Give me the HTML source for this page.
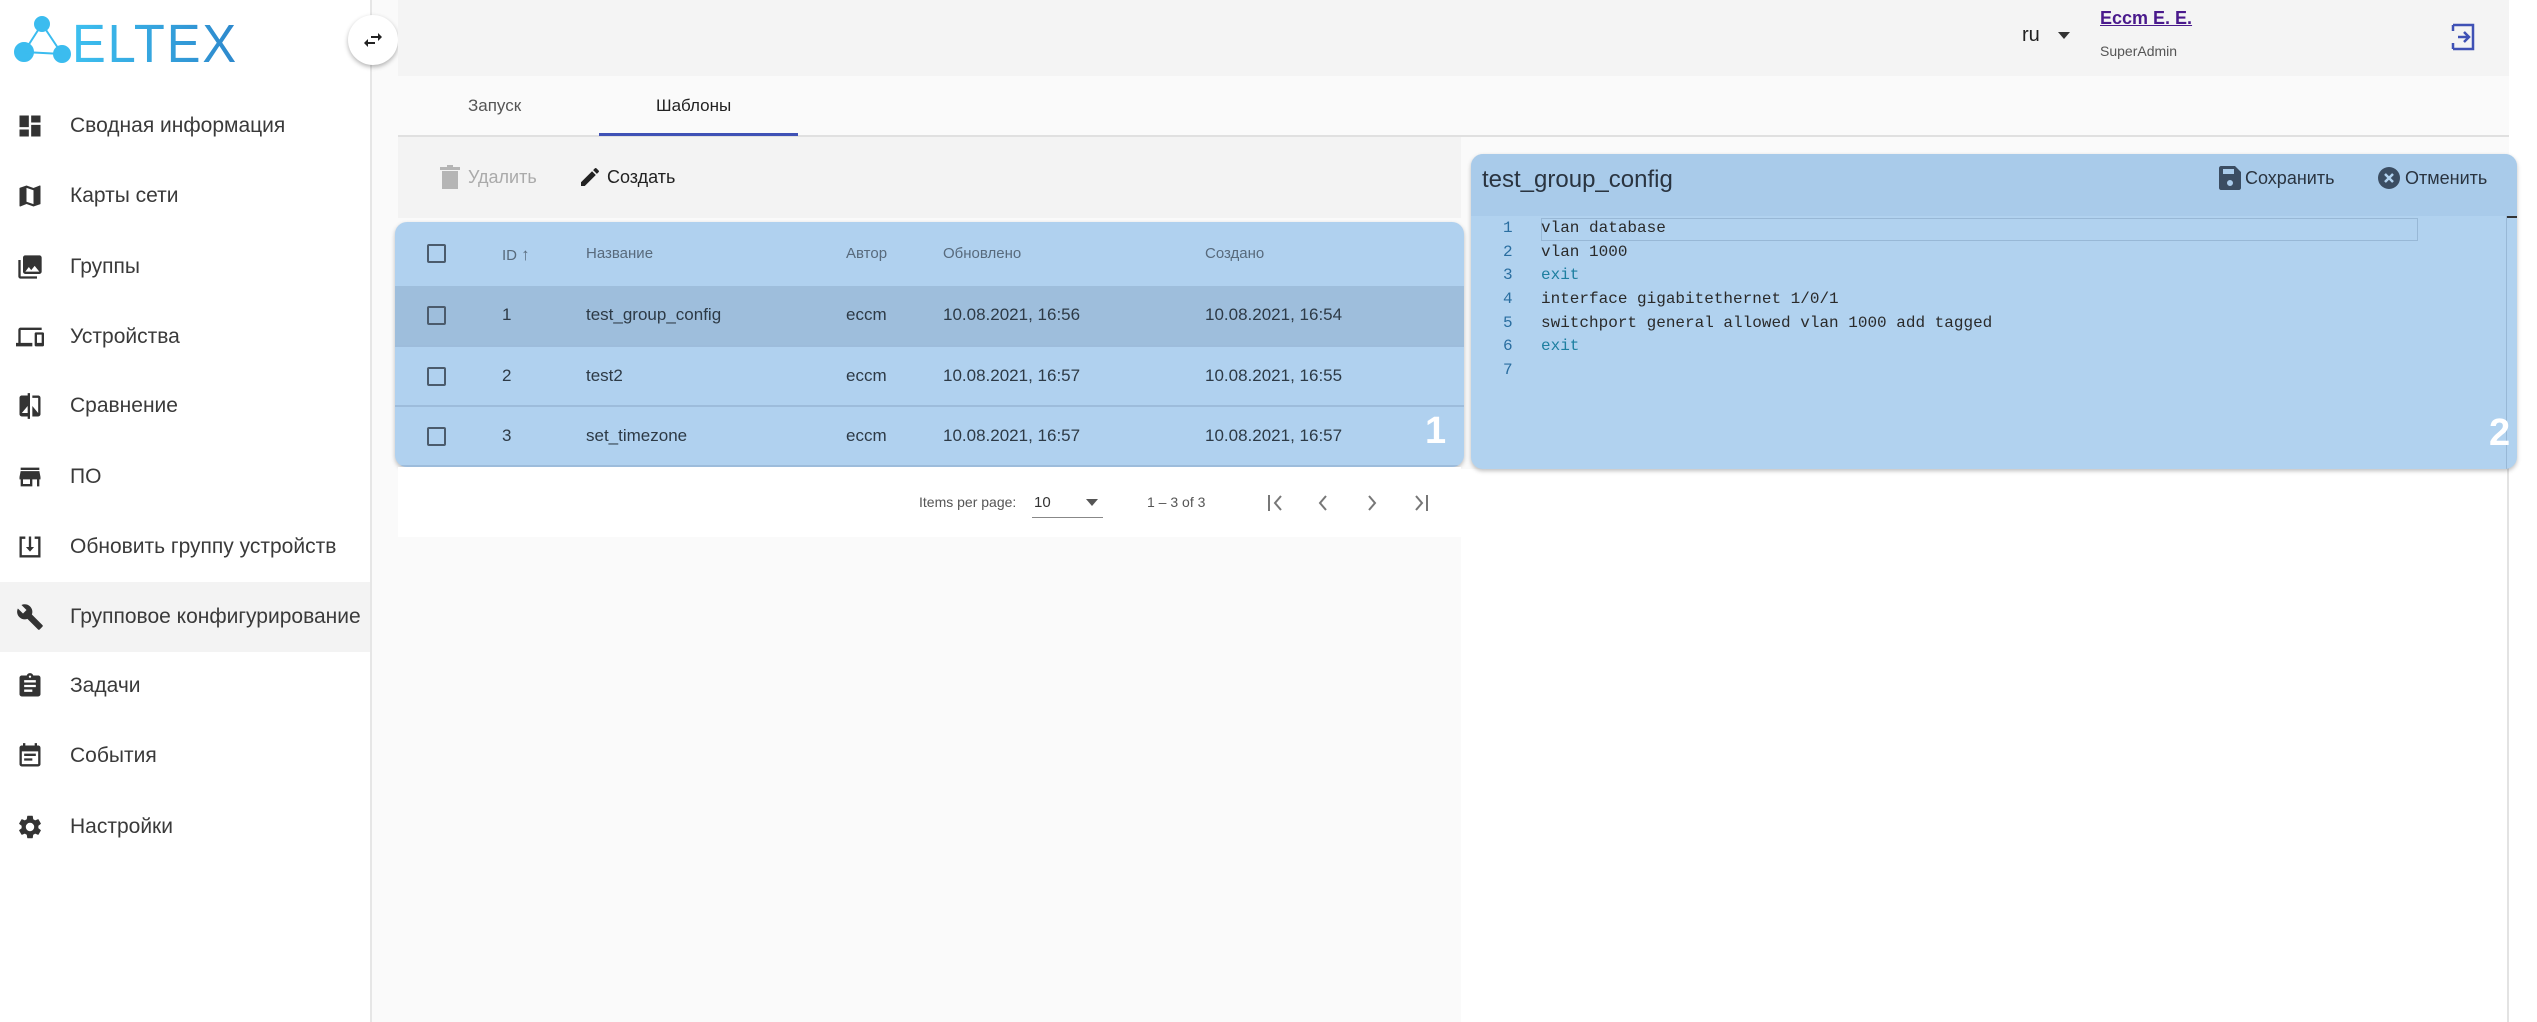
<!DOCTYPE html>
<html><head><meta charset="utf-8"><style>
*{box-sizing:border-box;margin:0;padding:0}
body{width:2537px;height:1022px;overflow:hidden;background:#fafafa;font-family:"Liberation Sans","Noto Sans CJK SC",sans-serif;color:#333;position:relative}
.abs{position:absolute}
#side{left:0;top:0;width:372px;height:1022px;background:#fff;border-right:2px solid #e6e6e6}
.nav{position:absolute;left:0;width:370px;height:70px;display:flex;align-items:center;font-size:21px;color:#3a3a3a}
.nav svg{position:absolute;left:16px;width:28px;height:28px}
.nav span{position:absolute;left:70px}
.nav.act{background:#f3f3f3}
#hdr{left:398px;top:0;width:2111px;height:76px;background:#f4f4f4}
.tab{position:absolute;top:96px;font-size:17px;color:#555}
#tb{left:398px;top:137px;width:1063px;height:81px;background:#f3f3f3}
#card{left:395px;top:222px;width:1069px;height:245px;background:#b0d1ef;border-radius:12px;box-shadow:0 2px 4px rgba(0,0,0,.25);overflow:hidden}
.row{position:absolute;left:0;width:100%;border-bottom:2px solid #9dbcdb}
.cb{position:absolute;left:32px;width:19px;height:19px;border:2px solid #4b5b6c;border-radius:2px}
.c{position:absolute;font-size:17px;color:#2d3a46}
.h{position:absolute;font-size:15px;color:#586a7c}
#pag{left:398px;top:467px;width:1063px;height:70px;background:#fff}
#ed{left:1471px;top:154px;width:1046px;height:315px;background:#b1d2ef;border-radius:12px;box-shadow:0 2px 4px rgba(0,0,0,.25);overflow:hidden}
.ln{position:absolute;left:32px;font-family:"Liberation Mono",monospace;font-size:16px;color:#2a6ea0}
.cd{position:absolute;left:70px;font-family:"Liberation Mono",monospace;font-size:16px;color:#2a2a2a;white-space:pre}
.kw{color:#1d7fa0}
</style></head><body>
<div id="side" class="abs">
<svg class="abs" style="left:10px;top:12px" width="240" height="55" viewBox="0 0 240 55">
<defs><linearGradient id="g" x1="0" x2="1"><stop offset="0" stop-color="#3dc0f0"/><stop offset="1" stop-color="#2d88cc"/></linearGradient></defs>
<g fill="#3bbcef" stroke="#3bbcef" stroke-width="2"><circle cx="32" cy="12" r="7"/><circle cx="14" cy="40" r="9"/><circle cx="52" cy="42" r="8"/><line x1="32" y1="12" x2="14" y2="40"/><line x1="14" y1="40" x2="52" y2="42"/><line x1="32" y1="12" x2="52" y2="42"/></g>
<text x="62" y="50" font-family="Liberation Sans" font-size="54" fill="url(#g)" letter-spacing="2" textLength="166" lengthAdjust="spacingAndGlyphs">ELTEX</text>
</svg>
<div class="nav" style="top:91px"><svg viewBox="0 0 24 24"><path fill="#333" d="M3 13h8V3H3zm0 8h8v-6H3zm10 0h8V11h-8zm0-18v6h8V3z"/></svg><span>Сводная информация</span></div>
<div class="nav" style="top:161px"><svg viewBox="0 0 24 24"><path fill="#333" d="M20.5 3l-.16.03L15 5.1 9 3 3.36 4.9c-.21.07-.36.25-.36.48V20.5c0 .28.22.5.5.5l.16-.03L9 18.9l6 2.1 5.64-1.9c.21-.07.36-.25.36-.48V3.5c0-.28-.22-.5-.5-.5zM15 19l-6-2.11V5l6 2.11z"/></svg><span>Карты сети</span></div>
<div class="nav" style="top:232px"><svg viewBox="0 0 24 24"><path fill="#333" d="M22 16V4c0-1.1-.9-2-2-2H8c-1.1 0-2 .9-2 2v12c0 1.1.9 2 2 2h12c1.1 0 2-.9 2-2zm-11-4l2.030 2.71L16 11l4 5H8zM2 6v14c0 1.1.9 2 2 2h14v-2H4V6z"/></svg><span>Группы</span></div>
<div class="nav" style="top:302px"><svg viewBox="0 0 24 24"><path fill="#333" d="M4 6h18V4H4c-1.1 0-2 .9-2 2v11H0v3h14v-3H4zm19 2h-6c-.55 0-1 .45-1 1v10c0 .55.45 1 1 1h6c.55 0 1-.45 1-1V9c0-.55-.45-1-1-1zm-1 9h-4v-7h4z"/></svg><span>Устройства</span></div>
<div class="nav" style="top:371px"><svg viewBox="0 0 24 24"><path fill="#333" d="M10 3H5c-1.1 0-2 .9-2 2v14c0 1.1.9 2 2 2h5v2h2V1h-2zm0 15H5l5-6zm9-15h-5v2h5v13l-5-6v9h5c1.1 0 2-.9 2-2V5c0-1.1-.9-2-2-2z"/></svg><span>Сравнение</span></div>
<div class="nav" style="top:442px"><svg viewBox="0 0 24 24"><path fill="#333" d="M20 4H4v2h16zm1 10v-2l-1-5H4l-1 5v2h1v6h10v-6h4v6h2v-6zm-9 4H6v-4h6z"/></svg><span>ПО</span></div>
<div class="nav" style="top:512px"><svg viewBox="0 0 24 24"><path fill="none" stroke="#333" stroke-width="2" d="M8 4H4v16h16V4h-4"/><path fill="#333" d="M11 3h2v9h2.5L12 16l-3.5-4H11z"/></svg><span>Обновить группу устройств</span></div>
<div class="nav act" style="top:582px"><svg viewBox="0 0 24 24"><path fill="#333" d="M22.7 19l-9.1-9.1c.9-2.3.4-5-1.5-6.9-2-2-5-2.4-7.4-1.3L9 6 6 9 1.6 4.7C.4 7.1.9 10.1 2.9 12.1c1.9 1.9 4.6 2.4 6.9 1.5l9.1 9.1c.4.4 1 .4 1.4 0l2.3-2.3c.5-.4.5-1.1.1-1.4z"/></svg><span>Групповое конфигурирование</span></div>
<div class="nav" style="top:651px"><svg viewBox="0 0 24 24"><path fill="#333" d="M19 3h-4.18C14.4 1.84 13.3 1 12 1s-2.4.84-2.820 2H5c-1.1 0-2 .9-2 2v14c0 1.1.9 2 2 2h14c1.1 0 2-.9 2-2V5c0-1.1-.9-2-2-2zm-7 0c.55 0 1 .45 1 1s-.45 1-1 1-1-.45-1-1 .45-1 1-1zm2 14H7v-2h7zm3-4H7v-2h10zm0-4H7V7h10z"/></svg><span>Задачи</span></div>
<div class="nav" style="top:721px"><svg viewBox="0 0 24 24"><path fill="#333" d="M17 10H7v2h10zm2-7h-1V1h-2v2H8V1H6v2H5c-1.11 0-2 .9-2 2v14c0 1.1.89 2 2 2h14c1.1 0 2-.9 2-2V5c0-1.1-.9-2-2-2zm0 16H5V8h14zm-5-5H7v2h7z"/></svg><span>События</span></div>
<div class="nav" style="top:792px"><svg viewBox="0 0 24 24"><path fill="#333" d="M19.14 12.94c.04-.3.06-.61.06-.94s-.02-.64-.07-.94l2.03-1.58a.49.49 0 00.12-.61l-1.920-3.32a.49.49 0 00-.59-.22l-2.39.96c-.5-.38-1.03-.7-1.62-.94l-.36-2.54a.48.48 0 00-.48-.41h-3.84c-.24 0-.43.17-.47.41l-.36 2.54c-.59.24-1.13.57-1.62.94l-2.39-.96a.48.48 0 00-.59.22L2.740 8.87c-.12.21-.08.47.12.61l2.03 1.58c-.05.3-.09.63-.09.94s.02.64.07.94l-2.03 1.58a.49.49 0 00-.12.61l1.92 3.32c.12.22.37.29.59.22l2.39-.96c.5.38 1.03.7 1.62.94l.36 2.54c.05.24.24.41.48.41h3.84c.24 0 .44-.17.47-.41l.36-2.54c.59-.24 1.13-.56 1.62-.94l2.39.96c.22.08.47 0 .59-.22l1.92-3.32c.12-.22.07-.47-.12-.61zM12 15.6A3.6 3.6 0 1112 8.4a3.6 3.6 0 010 7.2z"/></svg><span>Настройки</span></div>
</div>
<div class="abs" style="left:348px;top:15px;width:50px;height:50px;border-radius:50%;background:#fff;box-shadow:0 2px 5px rgba(0,0,0,.3)"><svg class="abs" style="left:13px;top:13px" width="24" height="24" viewBox="0 0 24 24"><path fill="#222" d="M6.99 11L3 15l3.99 4v-3H14v-2H6.99zM21 9l-3.99-4v3H10v2h7.01v3z"/></svg></div>
<div id="hdr" class="abs">
<div class="abs" style="left:1624px;top:24px;font-size:20px;color:#222">ru</div>
<div class="abs" style="left:1660px;top:32px;width:0;height:0;border-left:6px solid transparent;border-right:6px solid transparent;border-top:7px solid #333"></div>
<div class="abs" style="left:1702px;top:8px;font-size:18px;color:#4a1a8c;text-decoration:underline;font-weight:bold">Eccm E. E.</div>
<div class="abs" style="left:1702px;top:43px;font-size:14px;color:#555">SuperAdmin</div>
<svg class="abs" style="left:2052px;top:23px" width="26" height="28" viewBox="0 0 26 28"><path fill="none" stroke="#3f51b5" stroke-width="2.5" d="M3 2h20v24H3M3 2v6M3 20v6M8 14h11M14 9l5 5-5 5"/></svg>
</div>
<div class="tab" style="left:468px">Запуск</div>
<div class="tab" style="left:656px;color:#222">Шаблоны</div>
<div class="abs" style="left:398px;top:135px;width:2111px;height:2px;background:#e0e0e0"></div>
<div class="abs" style="left:599px;top:133px;width:199px;height:3px;background:#3f51b5"></div>
<div id="tb" class="abs">
<svg class="abs" style="left:42px;top:28px" width="20" height="24" viewBox="0 0 20 24"><path fill="#b5b5b5" d="M2 6h16v18H2zM0 2h20v3H0zM7 0h6v2H7z"/></svg>
<div class="abs" style="left:70px;top:30px;font-size:18px;color:#aaa">Удалить</div>
<svg class="abs" style="left:180px;top:28px" width="24" height="24" viewBox="0 0 24 24"><path fill="#222" d="M3 17.25V21h3.75L17.81 9.94l-3.75-3.75zM20.71 7.04a1 1 0 000-1.41l-2.34-2.34a1 1 0 00-1.41 0l-1.83 1.83 3.75 3.75z"/></svg>
<div class="abs" style="left:209px;top:30px;font-size:18px;color:#222">Создать</div>
</div>
<div id="card" class="abs">
<div class="row" style="top:0;height:64px;border-bottom:none"><div class="cb" style="top:22px"></div><div class="h" style="left:107px;top:23px">ID <b style="font-size:17px">↑</b></div><div class="h" style="left:191px;top:23px">Название</div><div class="h" style="left:451px;top:23px">Автор</div><div class="h" style="left:548px;top:23px">Обновлено</div><div class="h" style="left:810px;top:23px">Создано</div></div>
<div class="row" style="top:64px;height:61px;background:#9ebedc"><div class="cb" style="top:20px"></div><div class="c" style="left:107px;top:19px">1</div><div class="c" style="left:191px;top:19px">test_group_config</div><div class="c" style="left:451px;top:19px">eccm</div><div class="c" style="left:548px;top:19px">10.08.2021, 16:56</div><div class="c" style="left:810px;top:19px">10.08.2021, 16:54</div></div>
<div class="row" style="top:125px;height:60px"><div class="cb" style="top:20px"></div><div class="c" style="left:107px;top:19px">2</div><div class="c" style="left:191px;top:19px">test2</div><div class="c" style="left:451px;top:19px">eccm</div><div class="c" style="left:548px;top:19px">10.08.2021, 16:57</div><div class="c" style="left:810px;top:19px">10.08.2021, 16:55</div></div>
<div class="row" style="top:185px;height:60px"><div class="cb" style="top:20px"></div><div class="c" style="left:107px;top:19px">3</div><div class="c" style="left:191px;top:19px">set_timezone</div><div class="c" style="left:451px;top:19px">eccm</div><div class="c" style="left:548px;top:19px">10.08.2021, 16:57</div><div class="c" style="left:810px;top:19px">10.08.2021, 16:57</div></div>
<div class="abs" style="left:1030px;top:188px;font-size:38px;font-weight:bold;color:#fff">1</div>
</div>
<div id="pag" class="abs">
<div class="abs" style="left:521px;top:27px;font-size:14px;color:#555">Items per page:</div>
<div class="abs" style="left:636px;top:27px;font-size:15px;color:#333">10</div>
<div class="abs" style="left:634px;top:50px;width:71px;height:1px;background:#888"></div>
<div class="abs" style="left:688px;top:32px;border-left:6px solid transparent;border-right:6px solid transparent;border-top:7px solid #555"></div>
<div class="abs" style="left:749px;top:27px;font-size:14px;color:#555">1 – 3 of 3</div>
<svg class="abs" style="left:866px;top:24px" width="180" height="24" viewBox="0 0 180 24" fill="none" stroke="#777" stroke-width="2"><path d="M5 4v16M17 5l-6 7 6 7M62 5l-6 7 6 7M105 5l6 7-6 7M152 5l6 7-6 7M163 4v16"/></svg>
</div>
<div class="abs" style="left:1461px;top:469px;width:1047px;height:553px;background:#fff"></div>
<div class="abs" style="left:2507px;top:200px;width:2px;height:822px;background:#e3e3e3"></div>
<div class="abs" style="left:2509px;top:0;width:28px;height:1022px;background:#fff"></div>
<div id="ed" class="abs">
<div class="abs" style="left:0;top:0;width:100%;height:62px;background:#a9cbea"></div>
<div class="abs" style="left:11px;top:12px;font-size:24px;color:#2a3440">test_group_config</div>
<svg class="abs" style="left:748px;top:12px" width="22" height="24" viewBox="0 0 22 24"><path fill="#3b4d62" d="M0 2C0 1 1 0 2 0h14l6 6v16c0 1-1 2-2 2H2c-1 0-2-1-2-2zM4 3v5h11V3zM11 14a3 3 0 100 6 3 3 0 000-6z"/></svg>
<div class="abs" style="left:774px;top:14px;font-size:18px;color:#2a3440">Сохранить</div>
<svg class="abs" style="left:906px;top:12px" width="24" height="24" viewBox="0 0 24 24"><circle cx="12" cy="12" r="11" fill="#3b4d62"/><path stroke="#b1d2ef" stroke-width="2.5" d="M8 8l8 8M16 8l-8 8"/></svg>
<div class="abs" style="left:934px;top:14px;font-size:18px;color:#2a3440">Отменить</div>
<div class="abs" style="left:70px;top:64px;width:877px;height:23px;border:1px solid #98b8d6"></div>
<div class="abs" style="left:1036px;top:62px;width:10px;height:2px;background:#333"></div>
<div class="abs" style="left:1035px;top:62px;width:1px;height:260px;background:#98b8d6"></div>
<div class="ln" style="top:65px">1</div><div class="cd" style="top:65px">vlan database</div>
<div class="ln" style="top:89px">2</div><div class="cd" style="top:89px">vlan 1000</div>
<div class="ln" style="top:112px">3</div><div class="cd kw" style="top:112px">exit</div>
<div class="ln" style="top:136px">4</div><div class="cd" style="top:136px">interface gigabitethernet 1/0/1</div>
<div class="ln" style="top:160px">5</div><div class="cd" style="top:160px">switchport general allowed vlan 1000 add tagged</div>
<div class="ln" style="top:183px">6</div><div class="cd kw" style="top:183px">exit</div>
<div class="ln" style="top:207px">7</div>
<div class="abs" style="left:1018px;top:258px;font-size:38px;font-weight:bold;color:#fff">2</div>
</div>
</body></html>
